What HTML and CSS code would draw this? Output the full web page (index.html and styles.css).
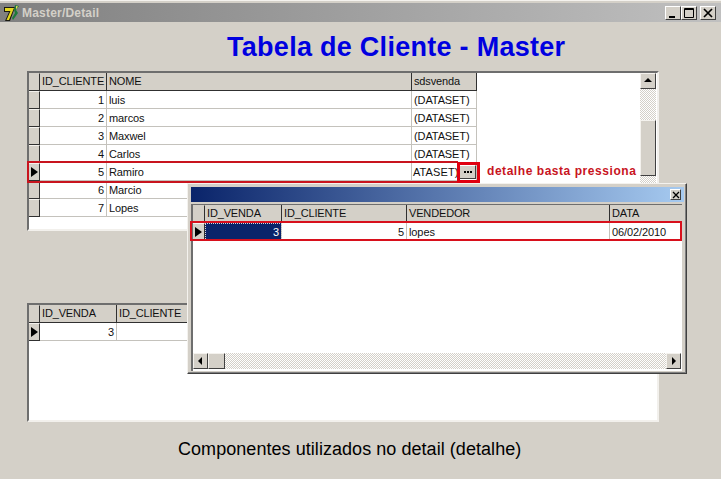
FILE: index.html
```html
<!DOCTYPE html>
<html>
<head>
<meta charset="utf-8">
<title>Master/Detail</title>
<link rel="stylesheet" href="styles.css">
</head>
<body>
<div class="window">
  <div class="titlebar">
    <svg class="logo" width="18" height="18" viewBox="0 0 18 18"><path d="M1 3h11l-1 3-4 11H2l4-9H1z" fill="#1a1a10"/><path d="M2 4h9L6 16H3.5l4-9H2z" fill="#e4d820"/><path d="M12 1l4 1-3 4 2 3-5 7-1-2 3-5-1-3z" fill="#1e7a3a"/><path d="M13 2l2 .5-2 3z" fill="#e8e060"/></svg>
    <span class="title-text">Master/Detail</span>
    <div class="controls">
      <span class="ctl"><svg width="14" height="14" viewBox="0 0 14 14"><rect x="3" y="10" width="6" height="2" fill="#000"/></svg></span>
      <span class="ctl"><svg width="14" height="14" viewBox="0 0 14 14"><path d="M2.5 2.5h9v9h-9z M2 3.5h10" fill="none" stroke="#000"/></svg></span>
      <span class="ctl ctl-close"><svg width="14" height="14" viewBox="0 0 14 14"><path d="M3 3l8 8M11 3l-8 8" stroke="#000" stroke-width="1.7"/></svg></span>
    </div>
  </div>

  <h1 class="heading">Tabela de Cliente - Master</h1>

  <div class="grid grid-master">
    <div class="grid-body">
      <div class="row head">
        <div class="ind"></div><div class="cell c-id">ID_CLIENTE</div><div class="cell c-nome">NOME</div><div class="cell c-ds">sdsvenda</div>
      </div>
      <div class="row"><div class="ind"></div><div class="cell c-id num">1</div><div class="cell c-nome">luis</div><div class="cell c-ds">(DATASET)</div></div>
      <div class="row"><div class="ind"></div><div class="cell c-id num">2</div><div class="cell c-nome">marcos</div><div class="cell c-ds">(DATASET)</div></div>
      <div class="row"><div class="ind"></div><div class="cell c-id num">3</div><div class="cell c-nome">Maxwel</div><div class="cell c-ds">(DATASET)</div></div>
      <div class="row"><div class="ind"></div><div class="cell c-id num">4</div><div class="cell c-nome">Carlos</div><div class="cell c-ds">(DATASET)</div></div>
      <div class="row"><div class="ind cur"></div><div class="cell c-id num">5</div><div class="cell c-nome">Ramiro</div><div class="cell c-ds ds-edit"><span class="clip">ATASET)</span><span class="dots"><i></i><i></i><i></i></span></div></div>
      <div class="row"><div class="ind"></div><div class="cell c-id num">6</div><div class="cell c-nome">Marcio</div><div class="cell c-ds"></div></div>
      <div class="row"><div class="ind"></div><div class="cell c-id num">7</div><div class="cell c-nome">Lopes</div><div class="cell c-ds"></div></div>
    </div>
    <div class="vscroll">
      <span class="sbtn"><svg width="16" height="15" viewBox="0 0 16 15"><path d="M8 5l-4 4h8z" fill="#000"/></svg></span>
      <span class="track t1"></span>
      <span class="thumb"></span>
      <span class="track t2"></span>
    </div>
  </div>

  <div class="grid grid-detail">
    <div class="grid-body">
      <div class="row head">
        <div class="ind"></div><div class="cell c-v">ID_VENDA</div><div class="cell c-c">ID_CLIENTE</div>
      </div>
      <div class="row"><div class="ind cur"></div><div class="cell c-v num">3</div><div class="cell c-c"></div></div>
    </div>
  </div>

  <p class="caption">Componentes utilizados no detail (detalhe)</p>

  <div class="mark mark-row"></div>
  <div class="mark mark-btn"></div>
  <div class="note">detalhe basta pressiona</div>

  <div class="popup">
    <div class="pop-title">
      <span class="pop-close"><svg width="10" height="10" viewBox="0 0 10 10"><path d="M2 2l6 6M8 2l-6 6" stroke="#000" stroke-width="1.3"/></svg></span>
    </div>
    <div class="pop-grid">
      <div class="pop-rows">
        <div class="row head">
          <div class="ind ind-pop"></div><div class="cell p-v">ID_VENDA</div><div class="cell p-c">ID_CLIENTE</div><div class="cell p-n">VENDEDOR</div><div class="cell p-d">DATA</div>
        </div>
        <div class="row">
          <div class="ind ind-pop cur"></div><div class="cell p-v num selected">3</div><div class="cell p-c num">5</div><div class="cell p-n">lopes</div><div class="cell p-d">06/02/2010</div>
        </div>
      </div>
      <div class="hscroll">
        <span class="sbtn sbtn-h"><svg width="15" height="16" viewBox="0 0 15 16"><path d="M5 8l4-4v8z" fill="#000"/></svg></span>
        <span class="thumb thumb-h"></span>
        <span class="track track-h"></span>
        <span class="sbtn sbtn-h"><svg width="15" height="16" viewBox="0 0 15 16"><path d="M10 8l-4-4v8z" fill="#000"/></svg></span>
      </div>
    </div>
    <div class="mark mark-pop"></div>
  </div>
</div>
</body>
</html>
```

FILE: styles.css
```css
* { box-sizing: border-box; }
html, body { margin: 0; padding: 0; }
body {
  width: 721px;
  height: 479px;
  overflow: hidden;
  background: #d4d0c8;
  font-family: "Liberation Sans", Arial, sans-serif;
  font-size: 11px;
  color: #111;
}
.window {
  position: relative;
  width: 721px;
  height: 479px;
  padding-top: 3px;
  display: flex;
  flex-direction: column;
  border-top: 1px solid #f4f2ee;
  background: #d4d0c8;
}
.titlebar {
  height: 19px;
  margin-top: -1px;
  flex: none;
  display: flex;
  align-items: center;
  padding: 0 4px 0 3px;
  background: linear-gradient(90deg, #808080, #c0c0c0);
}
.logo { flex: none; margin-right: 1px; }
.title-text {
  font-size: 12px;
  font-weight: bold;
  color: #d4d0c8;
  letter-spacing: 0.2px;
}
.controls { margin-left: auto; display: flex; margin-right: 1px; }
.ctl {
  width: 16px;
  height: 14px;
  display: flex;
  align-items: center;
  justify-content: center;
  background: #d4d0c8;
  border: 1px solid;
  border-color: #fff #404040 #404040 #fff;
}
.ctl-close { margin-left: 3px; }
.heading {
  margin: 7px 0 0 227px;
  height: 42px;
  font-size: 27px;
  line-height: 36px;
  font-weight: bold;
  letter-spacing: 0.28px;
  color: #0000e0;
  white-space: nowrap;
}
.grid {
  margin-left: 27px;
  width: 632px;
  flex: none;
  display: flex;
  background: #fff;
  border: 2px solid;
  border-color: #6e6e6e #f2f0ec #f2f0ec #6e6e6e;
}
.grid-master { height: 160px; margin-top: 0; }
.grid-detail { height: 119px; margin-top: 72px; }
.grid-body { flex: 1; min-width: 0; }
.row { display: flex; height: 18px; }
.row.head { height: 18px; }
.ind {
  width: 11px;
  flex: none;
  background: #d4d0c8;
  border-bottom: 1px solid #303030;
  border-right: 1px solid #303030;
  border-top: 1px solid #f4f2ee;
  position: relative;
}
.ind-pop { width: 12px; }
.ind.cur::after {
  content: "";
  position: absolute;
  left: 2px;
  top: 3px;
  border-left: 7px solid #000;
  border-top: 5px solid transparent;
  border-bottom: 5px solid transparent;
}
.cell {
  flex: none;
  height: 18px;
  padding: 0 2px;
  line-height: 18px;
  white-space: nowrap;
  overflow: hidden;
  letter-spacing: -0.1px;
  border-right: 1px solid #c4c2bc;
  border-bottom: 1px solid #c4c2bc;
}
.head .cell {
  background: #d4d0c8;
  border-right-color: #303030;
  border-bottom-color: #303030;
  padding-left: 2px;
  letter-spacing: -0.15px;
  line-height: 17px;
}
.head .ind { border-top-color: #d4d0c8; }
.num { text-align: right; }
.c-id { width: 67px; }
.c-nome { width: 305px; }
.c-ds { width: 65px; }
.c-v { width: 77px; }
.c-c { width: 72px; }
.ds-edit { display: flex; justify-content: space-between; padding: 0 0 0 1px; align-items: center; }
.clip { letter-spacing: 0.1px; }
.dots {
  width: 17px;
  height: 14px;
  flex: none;
  display: flex;
  align-items: center;
  justify-content: center;
  gap: 1px;
  background: #d4d0c8;
  border: 1px solid;
  border-color: #fff #404040 #404040 #fff;
}
.dots i { display: block; width: 2px; height: 2px; background: #000; }
.vscroll {
  width: 16px;
  margin-right: 1px;
  display: flex;
  flex-direction: column;
  flex: none;
}
.sbtn {
  display: block;
  flex: none;
  width: 16px;
  height: 16px;
  background: #d4d0c8;
  border: 1px solid;
  border-color: #f4f2ee #404040 #404040 #f4f2ee;
}
.sbtn svg { display: block; margin: -1px 0 0 -1px; }
.track {
  display: block;
  background: repeating-conic-gradient(#d4d0c8 0 25%, #fff 0 50%) 0 0 / 2px 2px;
}
.t1 { height: 31px; }
.thumb {
  display: block;
  background: #d4d0c8;
  border: 1px solid;
  border-color: #f4f2ee #404040 #404040 #f4f2ee;
}
.vscroll .thumb { height: 56px; }
.t2 { flex: 1; }
.caption {
  margin: 17px 0 0 178px;
  font-size: 18px;
  line-height: 20px;
  letter-spacing: 0.05px;
  color: #000;
  white-space: nowrap;
}
.mark { position: absolute; border: 3px solid #d8101c; }
.mark-row { left: 27px; top: 160px; width: 431px; height: 22px; border-width: 2px; border-right-width: 0; border-color: #c8141e; }
.mark-btn { left: 457px; top: 161px; width: 23px; height: 21px; border-color: #e00010; }
.note {
  position: absolute;
  left: 487px;
  top: 163px;
  width: 150px;
  overflow: hidden;
  font-weight: bold;
  font-size: 12px;
  line-height: 14px;
  letter-spacing: 0.55px;
  white-space: nowrap;
  color: #c8141e;
}
.popup {
  position: absolute;
  left: 187px;
  top: 182px;
  width: 500px;
  height: 191px;
  padding: 3px 2px 2px 3px;
  background: #d4d0c8;
  border: 1px solid;
  border-color: #f4f2ee #404040 #404040 #f4f2ee;
  box-shadow: inset -1px -1px 0 #808080;
  display: flex;
  flex-direction: column;
}
.pop-title {
  height: 15px;
  flex: none;
  display: flex;
  justify-content: flex-end;
  align-items: center;
  padding-right: 3px;
  background: linear-gradient(90deg, #0a246a, #a6caf0);
}
.pop-close {
  width: 11px;
  height: 11px;
  background: #d4d0c8;
  border: 1px solid;
  border-color: #fff #404040 #404040 #fff;
  display: flex;
  align-items: center;
  justify-content: center;
}
.pop-close svg { flex: none; }
.pop-grid {
  flex: 1;
  margin-top: 2px;
  margin-right: 2px;
  background: #fff;
  border-left: 2px solid #6e6e6e;
  border-top: 1px solid #6e6e6e;
  display: flex;
  flex-direction: column;
}
.pop-rows { flex: 1; }
.p-v { width: 77px; }
.p-c { width: 125px; }
.p-n { width: 203px; }
.p-d { width: 72px; border-right: 0; }
.selected {
  background: #0a246a;
  color: #fff;
  outline: 1px dotted #d8d8d8;
  outline-offset: -1px;
}
.hscroll { display: flex; height: 16px; margin-bottom: 2px; margin-right: 1px; }
.sbtn-h { width: 15px; }
.thumb-h { width: 17px; flex: none; }
.track-h { flex: 1; }
.mark-pop { left: 2px; top: 37px; width: 492px; height: 20px; border-width: 2px; border-color: #d8101c; }
```
